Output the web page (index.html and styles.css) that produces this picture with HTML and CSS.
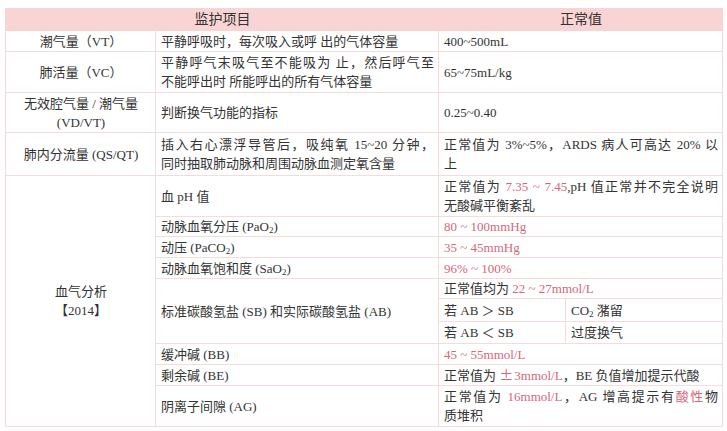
FILE: index.html
```html
<!DOCTYPE html>
<html lang="zh">
<head>
<meta charset="utf-8">
<link rel="stylesheet" href="styles.css">
</head>
<body>
<table class="tbl">
  <colgroup>
    <col class="c1"><col class="c2"><col class="c3a"><col class="c3b">
  </colgroup>
  <tr class="head h22">
    <th colspan="2">监护项目</th>
    <th colspan="2">正常值</th>
  </tr>
  <tr class="h21">
    <td class="lab">潮气量（VT）</td>
    <td>平静呼吸时，每次吸入或呼 出的气体容量</td>
    <td colspan="2">400~500mL</td>
  </tr>
  <tr class="h41">
    <td class="lab">肺活量（VC）</td>
    <td><span class="ln">平静呼气末吸气至不能吸为 止，然后呼气至</span><span class="last">不能呼出时 所能呼出的所有气体容量</span></td>
    <td colspan="2">65~75mL/kg</td>
  </tr>
  <tr class="h40">
    <td class="lab">无效腔气量 / 潮气量<br>(VD/VT)</td>
    <td>判断换气功能的指标</td>
    <td colspan="2">0.25~0.40</td>
  </tr>
  <tr class="h43">
    <td class="lab">肺内分流量 (QS/QT)</td>
    <td><span class="ln">插入右心漂浮导管后，吸纯氧 15~20 分钟，</span><span class="last">同时抽取肺动脉和周围动脉血测定氧含量</span></td>
    <td colspan="2"><span class="ln">正常值为 3%~5%，ARDS 病人可高达 20% 以</span><span class="last">上</span></td>
  </tr>
  <tr class="h41">
    <td class="lab" rowspan="10">血气分析<br>【2014】</td>
    <td>血 pH 值</td>
    <td colspan="2"><span class="ln">正常值为 <span class="red">7.35 ~ 7.45</span>,pH 值正常并不完全说明</span><span class="last">无酸碱平衡紊乱</span></td>
  </tr>
  <tr class="h20">
    <td>动脉血氧分压 (PaO<sub>2</sub>)</td>
    <td colspan="2" class="red">80 ~ 100mmHg</td>
  </tr>
  <tr class="h21">
    <td>动压 (PaCO<sub>2</sub>)</td>
    <td colspan="2" class="red">35 ~ 45mmHg</td>
  </tr>
  <tr class="h21">
    <td>动脉血氧饱和度 (SaO<sub>2</sub>)</td>
    <td colspan="2" class="red">96% ~ 100%</td>
  </tr>
  <tr class="h20">
    <td rowspan="3">标准碳酸氢盐 (SB) 和实际碳酸氢盐 (AB)</td>
    <td colspan="2">正常值均为 <span class="red">22 ~ 27mmol/L</span></td>
  </tr>
  <tr class="h23">
    <td>若 AB ＞ SB</td>
    <td>CO<sub>2</sub> 潴留</td>
  </tr>
  <tr class="h22">
    <td>若 AB ＜ SB</td>
    <td>过度换气</td>
  </tr>
  <tr class="h21">
    <td>缓冲碱 (BB)</td>
    <td colspan="2" class="red">45 ~ 55mmol/L</td>
  </tr>
  <tr class="h21">
    <td>剩余碱 (BE)</td>
    <td colspan="2">正常值为 <span class="red"><span class="pm">±</span>3mmol/L</span>，BE 负值增加提示代酸</td>
  </tr>
  <tr class="h41">
    <td>阴离子间隙 (AG)</td>
    <td colspan="2"><span class="ln">正常值为 <span class="red">16mmol/L</span>，AG 增高提示有<span class="red">酸性</span>物</span><span class="last">质堆积</span></td>
  </tr>
</table>
</body>
</html>
```

FILE: styles.css
```css
html, body {
  margin: 0;
  padding: 0;
  background: #ffffff;
}
body {
  padding: 8px 5px 0 5px;
  font-family: "Liberation Serif", "Noto Sans CJK SC", serif;
  font-size: 13px;
  color: #333333;
}
.tbl {
  border-collapse: collapse;
  table-layout: fixed;
  width: 717px;
}
.c1 { width: 150px; }
.c2 { width: 283px; }
.c3a { width: 127px; }
.c3b { width: 157px; }
.tbl th, .tbl td {
  border: 1px solid #f2dcdc;
  padding: 0 4px 0 5px;
  line-height: 19px;
  text-align: left;
  vertical-align: middle;
  font-weight: normal;
}
.tbl .head th {
  background: #f9d4d5;
  text-align: center;
  border-color: #f9d4d5;
  font-size: 14px;
}
.tbl td.lab {
  text-align: center;
}
.ln {
  display: block;
  white-space: nowrap;
  text-align: justify;
  text-align-last: justify;
}
.last {
  display: block;
  white-space: nowrap;
}
.red { color: #d4677a; }
.pm {
  font-family: "Noto Sans CJK SC", sans-serif;
  font-size: 14px;
  margin-right: 1px;
}
sub {
  font-size: 9px;
  line-height: 0;
  vertical-align: -2px;
}
.h20 { height: 20px; }
.h21 { height: 21px; }
.h22 { height: 22px; }
.h23 { height: 23px; }
.h40 { height: 40px; }
.h41 { height: 41px; }
.h43 { height: 43px; }
```
